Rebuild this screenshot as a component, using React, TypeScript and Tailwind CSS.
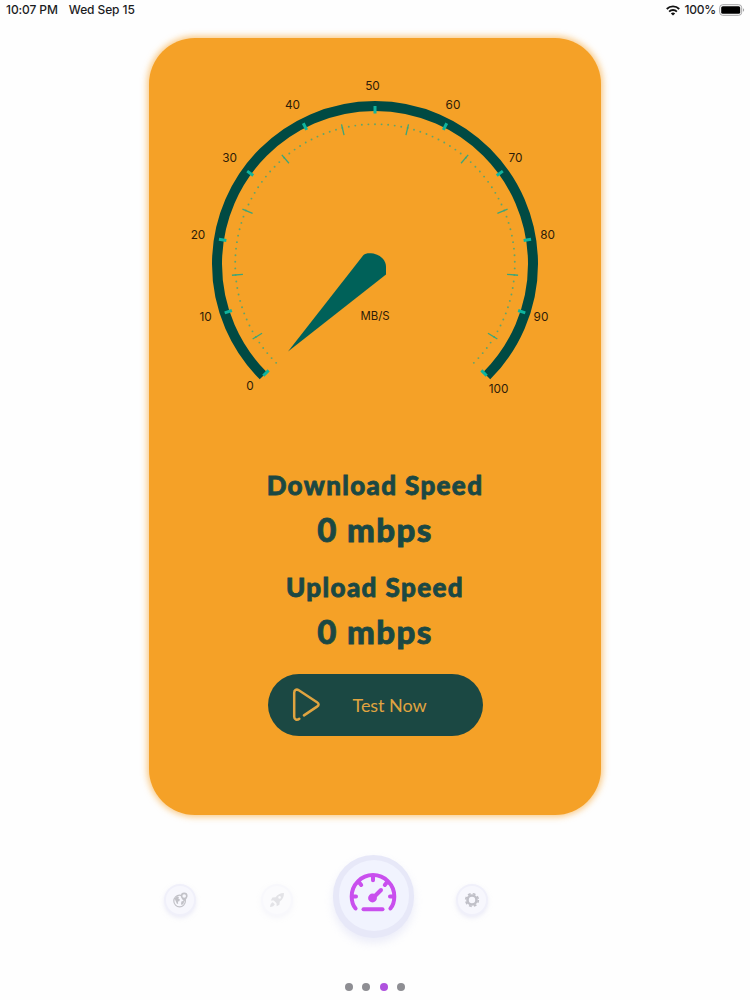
import { ReactNode } from "react";
import { twMerge } from "tailwind-merge";

const CX = 225;
const CY = 226;

const polar = (r: number, deg: number) => {
  const rad = (deg * Math.PI) / 180;
  return { x: CX + r * Math.cos(rad), y: CY + r * Math.sin(rad) };
};

const labels = [
  { text: "0", x: 100, y: 348 },
  { text: "10", x: 55.5, y: 279 },
  { text: "20", x: 48, y: 196.5 },
  { text: "30", x: 79.5, y: 120 },
  { text: "40", x: 142.5, y: 66.5 },
  { text: "50", x: 222.5, y: 47.5 },
  { text: "60", x: 303, y: 66.5 },
  { text: "70", x: 365.5, y: 120 },
  { text: "80", x: 397.5, y: 196.5 },
  { text: "90", x: 391, y: 279 },
  { text: "100", x: 348.5, y: 351 },
];

export default function App() {
  return (
    <div className="w-[750px] h-[1000px] overflow-hidden bg-[#fefefe] flex flex-col items-center font-[Inter,sans-serif]">
      <StatusBar />
      <main className="mt-[18px] w-[452px] h-[777px] shrink-0 rounded-[46px] bg-[#f5a127] shadow-[0_0_6px_2px_rgba(245,161,39,0.55)] flex flex-col items-center">
        <Gauge />
        <Speed label="Download Speed" className="mt-[29px] tracking-[1.35px]" />
        <Speed label="Upload Speed" className="mt-[22px] tracking-[1.4px]" />
        <button className="mt-[25px] w-[215px] h-[62px] shrink-0 rounded-full bg-[#1b4843] text-[#e0a440] flex items-center pl-[23px]">
          <PlayIcon />
          <span className="ml-[32px] font-[Lato,sans-serif] text-[18px] leading-6 tracking-[-0.05px] whitespace-nowrap">
            Test Now
          </span>
        </button>
      </main>
      <TabBar />
      <div className="mt-[36px] flex gap-[9.6px]">
        <Dot />
        <Dot />
        <Dot className="bg-[#af52de]" />
        <Dot />
      </div>
    </div>
  );
}

const StatusBar = () => (
  <header className="w-full h-5 shrink-0 pl-[6px] pr-[5px] flex items-center justify-between text-[12px] leading-5 font-medium text-[#1c1c1e] whitespace-nowrap">
    <div className="flex gap-[11px]">
      <span className="tracking-[-0.1px]">10:07 PM</span>
      <span className="tracking-[-0.1px]">Wed Sep 15</span>
    </div>
    <div className="flex items-center">
      <svg className="w-[14px] h-[11px] mr-[4px]" viewBox="0 0 13 10">
        <g fill="none" stroke="#111" strokeWidth="1.7">
          <path d="M0.7 3.6a8.3 8.3 0 0 1 11.6 0" />
          <path d="M2.9 6a5.2 5.2 0 0 1 7.2 0" />
        </g>
        <path d="M4.5 7.7a2.9 2.9 0 0 1 4 0l-2 2z" fill="#111" />
      </svg>
      <span className="tracking-[-0.2px]">100%</span>
      <svg className="w-[26px] h-3 ml-[3px]" viewBox="0 0 26 12">
        <rect x="0.7" y="0.7" width="22" height="10.6" rx="3" fill="#fff" stroke="#a4a4a6" />
        <rect x="2.2" y="2.2" width="19" height="7.6" rx="1.6" fill="#000" />
        <path d="M24 4.2a2 2 0 0 1 0 3.6z" fill="#a4a4a6" />
      </svg>
    </div>
  </header>
);

const Gauge = () => {
  const start = polar(158, 135);
  const end = polar(158, 45);

  return (
    <svg className="w-[450px] h-[400px] shrink-0" viewBox="0 0 450 400">
      <path
        d={`M${start.x} ${start.y}A158 158 0 1 1 ${end.x} ${end.y}`}
        fill="none"
        stroke="#004a43"
        strokeWidth="10"
      />
      {Array.from({ length: 101 }, (_, i) => {
        const p = polar(139.8, 135 + i * 2.7);
        return <circle key={i} cx={p.x} cy={p.y} r="0.95" fill="#5fa56a" />;
      })}
      {Array.from({ length: 10 }, (_, i) => {
        const a = polar(132.5, 148.5 + i * 27);
        const b = polar(143.5, 148.5 + i * 27);
        return (
          <line key={i} x1={a.x} y1={a.y} x2={b.x} y2={b.y} stroke="#3aa67b" strokeWidth="1.3" />
        );
      })}
      {labels.map(({ text }, i) => {
        const a = polar(150.5, 135 + i * 27);
        const b = polar(158, 135 + i * 27);
        return (
          <line key={text} x1={a.x} y1={a.y} x2={b.x} y2={b.y} stroke="#0fb59f" strokeWidth="3" />
        );
      })}
      <g fill="#2e1c08" fontFamily="Inter, sans-serif" fontSize="11.8" textAnchor="middle">
        {labels.map(({ text, x, y }) => (
          <text key={text} x={x} y={y + 4.3}>
            {text}
          </text>
        ))}
        <text x="225" y="281.5" fontSize="11.4">
          MB/S
        </text>
      </g>
      <path
        d="M138 313.5L213.5 217C215 215.3 218 215 221 215.2C230 216 236 222 236 229V236.5Z"
        fill="#006159"
      />
    </svg>
  );
};

type SpeedProps = {
  label: string;
  className?: string;
};

const Speed = ({ label, className }: SpeedProps) => (
  <section
    className={twMerge(
      "h-20 shrink-0 flex flex-col items-center font-[Lato,sans-serif] font-black text-[#1b4843] whitespace-nowrap [-webkit-text-stroke:0.8px_#1b4843]",
      className
    )}
  >
    <h2 className="text-[26px] leading-[36px]">{label}</h2>
    <p className="mt-[3px] text-[33px] leading-[46px] tracking-[1.4px]">0 mbps</p>
  </section>
);

const PlayIcon = () => (
  <svg className="w-[30px] h-[34px] shrink-0" viewBox="0 0 30 34">
    <path
      d="M8.3 30.7C6 32.6 3.2 31.6 3.2 28.8V4.8C3.2 2 5.4 .8 7.8 2.3L26 14.2C28.1 15.6 28.1 17.2 26 18.6L13 27.4"
      fill="none"
      stroke="currentColor"
      strokeWidth="2.5"
      strokeLinecap="round"
    />
  </svg>
);

const TabBar = () => (
  <nav className="mt-[40px] w-[450px] h-[92px] shrink-0 flex items-start">
    <Tab className="ml-[14px] mt-[29px]">
      <GlobeIcon />
    </Tab>
    <Tab className="ml-[65px] mt-[29px] opacity-40">
      <RocketIcon />
    </Tab>
    <button className="ml-[40px] w-[81px] h-[83px] rounded-full bg-[#e7e8f8] shadow-[0_5px_9px_rgba(215,218,244,0.45)] flex justify-center pt-[5px]">
      <span className="w-[70px] h-[71px] rounded-full bg-[#f1f3fe] flex justify-center pt-[12px]">
        <SpeedIcon />
      </span>
    </button>
    <Tab className="ml-[42px] mt-[29px]">
      <GearIcon />
    </Tab>
  </nav>
);

const Tab = ({ children, className }: { children: ReactNode; className?: string }) => (
  <button
    className={twMerge(
      "w-8 h-8 shrink-0 rounded-full bg-[#f7f7fd] border-2 border-[#f0f0fa] shadow-[0_2px_4px_rgba(220,220,242,0.5)] flex items-center justify-center",
      className
    )}
  >
    {children}
  </button>
);

const SpeedIcon = () => (
  <svg
    className="w-12 h-10 mr-[2px]"
    viewBox="0 0 48 40"
    fill="none"
    stroke="#c94fee"
    strokeWidth="4"
    strokeLinecap="round"
  >
    <path d="M6.6 36.5C3.6 33 2.7 28.9 2.7 24.4a21.3 21.3 0 0 1 42.6 0c0 4.5-.9 8.6-3.9 12.1" />
    <path d="M24 4v4.2M10 10.2l2.2 2.8M38 10.2L35.8 13M3 24.6h4M45 24.6h-4" />
    <path d="M24 26l8-8" />
    <path d="M14.5 37.3h19" />
    <circle cx="23.5" cy="26" r="2.4" fill="#c94fee" />
  </svg>
);

const GlobeIcon = () => (
  <svg className="w-[15px] h-4" viewBox="0 0 15 16">
    <circle cx="6.6" cy="9" r="5.8" fill="none" stroke="#c2c2c8" strokeWidth="1.2" />
    <path
      d="M1.6 6.6l2.6-2.4 1.8.8-.7 1.6 1.6.8-.6 1.8-1.4.4.3 1.8-1.2.5-1-2.2zM8.6 9.2l2.6-.2-.6 2.6-2 1.6-.6-2z"
      fill="#c2c2c8"
    />
    <path d="M11.2 9.4C8.8 6.8 7.8 5.4 7.8 4a3.4 3.4 0 0 1 6.8 0c0 1.4-1 2.8-3.4 5.4z" fill="#c2c2c8" />
    <circle cx="11.2" cy="4" r="1.8" fill="#f7f7fd" />
  </svg>
);

const RocketIcon = () => (
  <svg className="w-4 h-4" viewBox="0 0 16 16" fill="#bdbdc5">
    <path d="M15 1c-4 0-6.5 1.6-8.4 4.3L3.4 5.6 1.8 8.4l3 .2 2.7 2.7.2 3 2.7-1.6.4-3.2C13.5 7.5 15 5 15 1z" />
    <circle cx="10.6" cy="5.4" r="1.3" fill="#f7f7fd" />
    <path d="M3.7 10.2C2 10.8 1.3 12.5 1 15c2.4-.3 4.2-1 4.8-2.7z" />
  </svg>
);

const GearIcon = () => (
  <svg className="w-4 h-4" viewBox="0 0 16 16" fill="none" stroke="#c0c0c8">
    <circle cx="8" cy="8" r="6.3" strokeWidth="1.7" strokeDasharray="2.8 2.15" />
    <circle cx="8" cy="8" r="4.5" strokeWidth="2.6" />
  </svg>
);

const Dot = ({ className }: { className?: string }) => (
  <span className={twMerge("w-2 h-2 rounded-full bg-[#8e8e93]", className)} />
);
